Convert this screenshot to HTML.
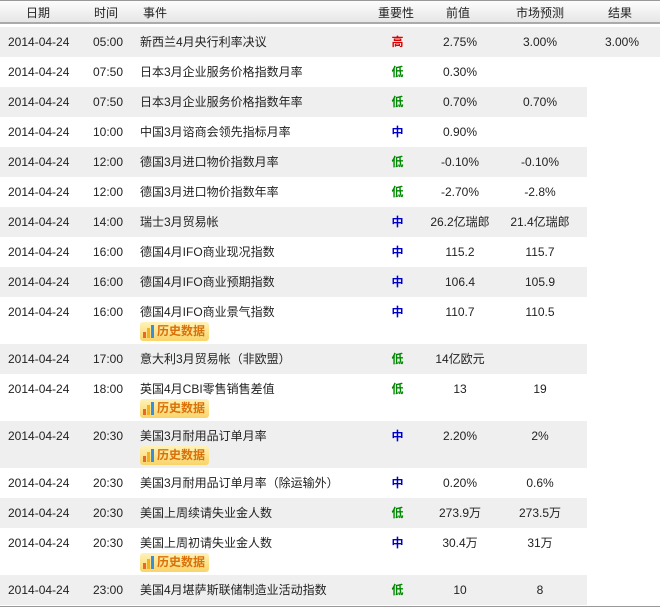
<!DOCTYPE html>
<html><head><meta charset="utf-8"><style>
body{margin:0;background:#fff;width:660px;height:610px;overflow:hidden;font-family:"Liberation Sans","Noto Sans CJK SC",sans-serif;font-size:12px;color:#222}
.hd{position:absolute;left:0;top:0;width:660px;height:24px;background:linear-gradient(#fdfdfd,#e6e6e6);border-bottom:2px solid #aaa;border-top:1px solid #999;box-sizing:border-box}
.c{position:absolute;white-space:nowrap;line-height:14px;height:14px}
.row{position:absolute;left:0;width:660px}
.g{background:#efefef}
.bd{position:absolute;left:140px;width:69px;height:19px;border-radius:3px;background:linear-gradient(#fff3b8,#f9d46a);color:#d9700a;font-weight:bold;font-size:12px;line-height:19px;box-sizing:border-box;padding-left:17px}
.bd i{position:absolute;left:3px;bottom:3px;width:3px;background:#e04a2a}
</style></head><body>
<div class="hd"></div>
<div class="c" style="left:26px;top:6px">日期</div>
<div class="c" style="left:94px;top:6px">时间</div>
<div class="c" style="left:143px;top:6px">事件</div>
<div class="c" style="left:378px;top:6px">重要性</div>
<div class="c" style="left:446px;top:6px">前值</div>
<div class="c" style="left:516px;top:6px">市场预测</div>
<div class="c" style="left:608px;top:6px">结果</div>
<div id="t"></div>
<script>
var R=[
["05:00","新西兰4月央行利率决议","高","2.75%","3.00%","3.00%",0],
["07:50","日本3月企业服务价格指数月率","低","0.30%","","",0],
["07:50","日本3月企业服务价格指数年率","低","0.70%","0.70%","",0],
["10:00","中国3月谘商会领先指标月率","中","0.90%","","",0],
["12:00","德国3月进口物价指数月率","低","-0.10%","-0.10%","",0],
["12:00","德国3月进口物价指数年率","低","-2.70%","-2.8%","",0],
["14:00","瑞士3月贸易帐","中","26.2亿瑞郎","21.4亿瑞郎","",0],
["16:00","德国4月IFO商业现况指数","中","115.2","115.7","",0],
["16:00","德国4月IFO商业预期指数","中","106.4","105.9","",0],
["16:00","德国4月IFO商业景气指数","中","110.7","110.5","",1],
["17:00","意大利3月贸易帐（非欧盟）","低","14亿欧元","","",0],
["18:00","英国4月CBI零售销售差值","低","13","19","",1],
["20:30","美国3月耐用品订单月率","中","2.20%","2%","",1],
["20:30","美国3月耐用品订单月率（除运输外）","中","0.20%","0.6%","",0],
["20:30","美国上周续请失业金人数","低","273.9万","273.5万","",0],
["20:30","美国上周初请失业金人数","中","30.4万","31万","",1],
["23:00","美国4月堪萨斯联储制造业活动指数","低","10","8","",0]];
var col={"高":"#d00","中":"#0000cc","低":"#080"};
var y=27,h="";
R.forEach(function(r,i){
 var H=r[6]?47:30,w=(r[5]?660:587);
 if(i%2==0)h+='<div class="row g" style="top:'+y+'px;height:'+H+'px;width:'+w+'px"></div>';
 var ty=y+8;
 h+='<div class="c" style="left:8px;top:'+ty+'px">2014-04-24</div>';
 h+='<div class="c" style="left:93px;top:'+ty+'px">'+r[0]+'</div>';
 h+='<div class="c" style="left:140px;top:'+ty+'px">'+r[1]+'</div>';
 h+='<div class="c" style="left:370px;width:55px;text-align:center;top:'+ty+'px;font-weight:bold;color:'+col[r[2]]+'">'+r[2]+'</div>';
 h+='<div class="c" style="left:420px;width:80px;text-align:center;top:'+ty+'px">'+r[3]+'</div>';
 h+='<div class="c" style="left:500px;width:80px;text-align:center;top:'+ty+'px">'+r[4]+'</div>';
 h+='<div class="c" style="left:587px;width:70px;text-align:center;top:'+ty+'px">'+r[5]+'</div>';
 if(r[6])h+='<div class="bd" style="top:'+(y+25)+'px"><i style="height:6px;background:#e8682a"></i><i style="left:7px;height:10px;background:#f2b21c"></i><i style="left:11px;height:13px;background:#3a8fd6"></i>历史数据</div>';
 y+=H;
});
h+='<div class="row" style="top:'+(y+1)+'px;height:1px;background:#999"></div>';
document.getElementById('t').innerHTML=h;
</script>
</body></html>
